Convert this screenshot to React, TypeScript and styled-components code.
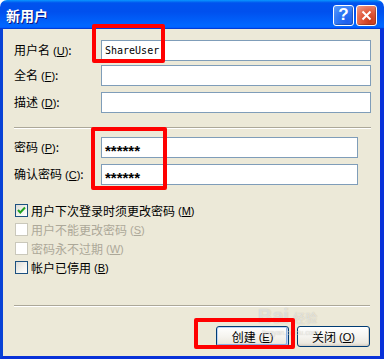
import React from "react";
import styled, { createGlobalStyle } from "styled-components";

const Global = createGlobalStyle`
  html, body { margin: 0; padding: 0; background: #ffffff; }
  body { font-family: "Noto Sans CJK SC", "Noto Sans", sans-serif; }
`;

const Window = styled.div`
  position: relative;
  width: 384px;
  height: 359px;
  display: flex;
  flex-direction: column;
  overflow: hidden;
  border-radius: 7px 7px 0 0;
`;

const TitleBar = styled.div`
  height: 29px;
  flex: none;
  display: flex;
  align-items: center;
  justify-content: space-between;
  padding: 0 7px 0 6px;
  box-sizing: border-box;
  background: linear-gradient(
    to bottom,
    #0997ff 0%,
    #0053ee 10%,
    #0050ee 40%,
    #0066ff 86%,
    #0066ff 92%,
    #005bff 95%,
    #003dd7 97%,
    #003dd7 100%
  );
`;

const Title = styled.div`
  color: #ffffff;
  font-size: 14px;
  font-weight: 700;
  text-shadow: 1px 1px 0 #0a1883;
  margin-top: 1px;
`;

const TitleButtons = styled.div`
  display: flex;
  gap: 2px;
  margin-top: 1px;
`;

const CaptionButton = styled.div<{ $kind: "help" | "close" }>`
  width: 21px;
  height: 21px;
  box-sizing: border-box;
  border: 1px solid #ffffff;
  border-radius: 3px;
  display: flex;
  align-items: center;
  justify-content: center;
  color: #ffffff;
  font-family: "Liberation Sans", Arial, sans-serif;
  font-weight: 700;
  font-size: 17px;
  background: ${(p) =>
    p.$kind === "help"
      ? "radial-gradient(circle at 70% 80%, #1e5ff0 0%, #2b74f4 45%, #5c9cfb 100%)"
      : "radial-gradient(circle at 70% 80%, #c83a1c 0%, #e15a3c 45%, #f0a08c 100%)"};
  box-shadow: inset -1px -1px 1px rgba(0, 0, 0, 0.25);
`;

const Client = styled.div`
  flex: 1;
  display: flex;
  flex-direction: column;
  background: #ece9d8;
  border-left: 3px solid #0842d6;
  border-right: 4px solid #0831d9;
  border-bottom: 3px solid #0831d9;
  padding: 0 9px 0 11px;
`;

const FieldRow = styled.div<{ $mt: number }>`
  display: flex;
  align-items: center;
  height: 21px;
  margin-top: ${(p) => p.$mt}px;
`;

const Label = styled.div`
  width: 87px;
  flex: none;
  font-size: 12px;
  color: #000000;
  white-space: nowrap;
  line-height: 14px;
`;

const Mn = styled.span`
  font-family: "Liberation Sans", Arial, sans-serif;
  font-size: 11px;
  margin-left: 3px;
  u { text-decoration-thickness: 1px; text-underline-offset: 1px; }
`;

const TextBox = styled.div<{ $w: number }>`
  width: ${(p) => p.$w}px;
  height: 21px;
  box-sizing: border-box;
  border: 1px solid #7f9db9;
  background: #ffffff;
  display: flex;
  align-items: center;
  padding-left: 3px;
  font-family: "DejaVu Sans Mono", "Liberation Mono", monospace;
  font-size: 10px;
  color: #000000;
`;

const Stars = styled.span`
  font-family: "Liberation Sans", Arial, sans-serif;
  font-weight: 700;
  font-size: 15px;
  letter-spacing: 0px;
  margin-top: 5px;
`;

const Separator = styled.div<{ $mt: number; $mr: number }>`
  height: 1px;
  margin-top: ${(p) => p.$mt}px;
  margin-right: ${(p) => p.$mr}px;
  background: #aca899;
  border-bottom: 1px solid #ffffff;
`;

const CheckList = styled.div`
  display: flex;
  flex-direction: column;
  gap: 6px;
  margin-top: 19px;
  padding-left: 1px;
`;

const CheckRow = styled.div<{ $disabled?: boolean }>`
  display: flex;
  align-items: center;
  height: 13px;
  font-size: 12px;
  color: ${(p) => (p.$disabled ? "#aca899" : "#000000")};
  white-space: nowrap;
`;

const Box = styled.div<{ $disabled?: boolean }>`
  width: 13px;
  height: 13px;
  box-sizing: border-box;
  flex: none;
  margin-right: 3px;
  display: flex;
  align-items: center;
  justify-content: center;
  border: 1px solid ${(p) => (p.$disabled ? "#cac8bb" : "#1c5180")};
  background: ${(p) =>
    p.$disabled ? "#ffffff" : "linear-gradient(135deg, #dcdcd7 0%, #f4f4f0 60%, #ffffff 100%)"};
`;

const ButtonRow = styled.div`
  display: flex;
  justify-content: flex-end;
  gap: 8px;
  margin-top: 19px;
  margin-right: 1px;
`;

const Button = styled.div<{ $default?: boolean }>`
  width: 73px;
  height: 21px;
  box-sizing: border-box;
  border: 1px solid #003c74;
  border-radius: 3px;
  display: flex;
  align-items: center;
  justify-content: center;
  font-size: 12px;
  color: #000000;
  background: linear-gradient(to bottom, #ffffff 0%, #f5f4ef 50%, #ece9e0 85%, #d6d0c5 100%);
  box-shadow: ${(p) =>
    p.$default
      ? "inset 0 0 0 1px #bcd4f6, inset -1px -1px 0 1px #89ade4"
      : "inset -1px -1px 0 0 #d6d0c5"};
`;

const Annotation = styled.div<{ $x: number; $y: number; $w: number; $h: number }>`
  position: absolute;
  left: ${(p) => p.$x}px;
  top: ${(p) => p.$y}px;
  width: ${(p) => p.$w}px;
  height: ${(p) => p.$h}px;
  box-sizing: border-box;
  border: 4px solid #ff0000;
  border-radius: 2px;
  pointer-events: none;
`;

const Watermark = styled.div`
  position: absolute;
  left: 258px;
  top: 306px;
  color: rgba(255, 255, 255, 0.55);
  text-shadow: 0 0 1px rgba(120, 115, 100, 0.45);
  pointer-events: none;
  display: flex;
  flex-direction: column;
  line-height: 1;
`;

const WmMain = styled.div`
  font-family: "Liberation Sans", Arial, sans-serif;
  font-weight: 700;
  font-size: 20px;
  span { font-family: "Noto Sans CJK SC", sans-serif; font-size: 12px; font-weight: 400; margin-left: 4px; }
`;

const WmSub = styled.div`
  font-family: "Liberation Sans", Arial, sans-serif;
  font-size: 7px;
  margin-top: 3px;
  margin-left: 4px;
`;

const Check = () => (
  <svg width="9" height="9" viewBox="0 0 9 9">
    <path d="M1 4 L3.3 6.5 L8 1.5" stroke="#21a121" strokeWidth="2" fill="none" />
  </svg>
);

const CloseX = () => (
  <svg width="11" height="11" viewBox="0 0 11 11">
    <path d="M1.5 1.5 L9.5 9.5 M9.5 1.5 L1.5 9.5" stroke="#ffffff" strokeWidth="2" />
  </svg>
);

const mn = (k: string) => (
  <Mn>
    (<u>{k}</u>)
  </Mn>
);

export default function App() {
  return (
    <>
      <Global />
      <Window>
        <TitleBar>
          <Title>新用户</Title>
          <TitleButtons>
            <CaptionButton $kind="help">?</CaptionButton>
            <CaptionButton $kind="close">
              <CloseX />
            </CaptionButton>
          </TitleButtons>
        </TitleBar>
        <Client>
          <FieldRow $mt={11}>
            <Label>用户名{mn("U")}:</Label>
            <TextBox $w={270}>ShareUser</TextBox>
          </FieldRow>
          <FieldRow $mt={4}>
            <Label>全名{mn("F")}:</Label>
            <TextBox $w={270} />
          </FieldRow>
          <FieldRow $mt={6}>
            <Label>描述{mn("D")}:</Label>
            <TextBox $w={270} />
          </FieldRow>
          <Separator $mt={14} $mr={0} />
          <FieldRow $mt={8}>
            <Label>密码{mn("P")}:</Label>
            <TextBox $w={257}>
              <Stars>******</Stars>
            </TextBox>
          </FieldRow>
          <FieldRow $mt={6}>
            <Label>确认密码{mn("C")}:</Label>
            <TextBox $w={257}>
              <Stars>******</Stars>
            </TextBox>
          </FieldRow>
          <CheckList>
            <CheckRow>
              <Box>
                <Check />
              </Box>
              用户下次登录时须更改密码{mn("M")}
            </CheckRow>
            <CheckRow $disabled>
              <Box $disabled />
              用户不能更改密码{mn("S")}
            </CheckRow>
            <CheckRow $disabled>
              <Box $disabled />
              密码永不过期{mn("W")}
            </CheckRow>
            <CheckRow>
              <Box />
              帐户已停用{mn("B")}
            </CheckRow>
          </CheckList>
          <Separator $mt={31} $mr={1} />
          <ButtonRow>
            <Button $default>创建{mn("E")}</Button>
            <Button>关闭{mn("O")}</Button>
          </ButtonRow>
        </Client>
        <Watermark>
          <WmMain>
            Bai<span>经验</span>
          </WmMain>
          <WmSub>jingyan.baidu.com</WmSub>
        </Watermark>
        <Annotation $x={92} $y={24} $w={73} $h={39} />
        <Annotation $x={91} $y={127} $w={76} $h={63} />
        <Annotation $x={194} $y={318} $w={101} $h={31} />
      </Window>
    </>
  );
}
